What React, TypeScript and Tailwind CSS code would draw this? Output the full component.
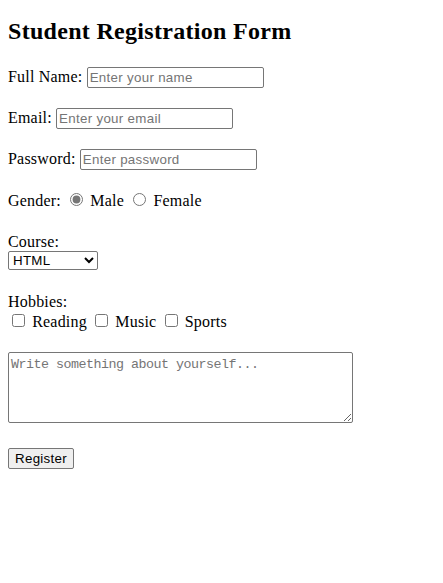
import { useState } from 'react'

const inputCls =
  "h-[21px] rounded-[2px] border border-[#767676] bg-white px-[2px] py-[1px] align-baseline font-['Liberation_Sans',Arial,sans-serif] text-[13.333px] leading-[normal] tracking-[0.3px] text-black placeholder:text-[#757575]"

const radioCls = 'mt-[3px] mr-[3px] ml-[5px] align-baseline accent-[#767676]'
const checkCls = 'mt-[3px] mr-[3px] mb-[3px] ml-[4px] align-baseline'

export default function App() {
  const [gender, setGender] = useState('male')

  return (
    <div className="min-h-[583px] bg-white p-2 font-['Liberation_Serif','Times_New_Roman',serif] text-[16px] leading-[normal] tracking-[0.2px] text-black">
      <h2 className="mt-[10px] mb-[22px] text-[24px] font-bold leading-[normal] tracking-[0.3px]">Student Registration Form</h2>

      <form onSubmit={(e) => e.preventDefault()}>
        <div className="mb-[20px]">
          Full Name: <input type="text" placeholder="Enter your name" className={`${inputCls} w-[177px]`} />
        </div>

        <div className="mb-[20px]">
          Email: <input type="email" placeholder="Enter your email" className={`${inputCls} w-[177px]`} />
        </div>

        <div className="mb-[20px]">
          Password: <input type="password" placeholder="Enter password" className={`${inputCls} w-[177px]`} />
        </div>

        <div className="mb-[23px]">
          Gender:{' '}
          <input type="radio" name="gender" checked={gender === 'male'} onChange={() => setGender('male')} className={radioCls} />{' '}
          Male{' '}
          <input type="radio" name="gender" checked={gender === 'female'} onChange={() => setGender('female')} className={radioCls} />{' '}
          Female
        </div>

        <div className="mb-[23px]">
          Course:
          <br />
          <select className="h-[19px] w-[90px] rounded-[2px] border border-[#767676] bg-white font-['Liberation_Sans',Arial,sans-serif] text-[13.333px] tracking-[0.3px] text-black">
            <option>HTML</option>
            <option>CSS</option>
            <option>JavaScript</option>
          </select>
        </div>

        <div className="mb-[21px]">
          Hobbies:
          <br />
          <input type="checkbox" className={checkCls} /> Reading{' '}
          <input type="checkbox" className={checkCls} /> Music{' '}
          <input type="checkbox" className={checkCls} /> Sports
        </div>

        <div className="mb-[21px]">
          <textarea
            placeholder="Write something about yourself..."
            className="h-[71px] w-[345px] rounded-[2px] border border-[#767676] bg-white px-[2px] pt-[4px] pb-[2px] align-baseline font-['Liberation_Mono','Courier_New',monospace] text-[13.333px] leading-[normal] tracking-[-0.5px] placeholder:text-[#757575]"
          />
        </div>

        <button
          type="submit"
          className="h-[21px] rounded-[2px] border border-[#767676] bg-[#efefef] px-[6px] py-[1px] font-['Liberation_Sans',Arial,sans-serif] text-[13.333px] leading-[normal] tracking-[0.3px] text-black"
        >
          Register
        </button>
      </form>
    </div>
  )
}
